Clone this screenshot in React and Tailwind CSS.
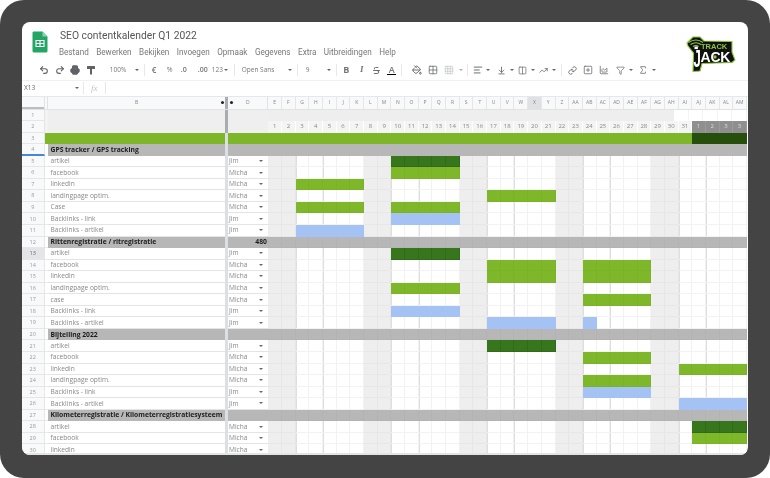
import React from "react";
import { Undo2, Redo2, Printer, Strikethrough, PaintBucket, Grid2x2, Grid3x3, AlignLeft, ArrowDownToLine, Columns2, TrendingUp, Link, SquarePlus, ChartArea, Filter, Sigma } from "lucide-react";

const COLS = ["E","F","G","H","I","J","K","L","M","N","O","P","Q","R","S","T","U","V","W","X","Y","Z","AA","AB","AC","AD","AE","AF","AG","AH","AI","AJ","AK","AL","AM"];
const WEEKEND = new Set([0,1,7,8,14,15,21,22,28,29]);
const WEEKLINE = new Set([2,9,16,23,30,4,11,18,25,32]);
const G = "g", D = "d", B = "b";

const ROWS = [
  { n: 5, t: "artikel", w: "Jim", bars: [[9, 13, D]] },
  { n: 6, t: "facebook", w: "Micha", bars: [[9, 13, G]] },
  { n: 7, t: "linkedin", w: "Micha", bars: [[2, 6, G]] },
  { n: 8, t: "landingpage optim.", w: "Micha", bars: [[16, 20, G]] },
  { n: 9, t: "Case", w: "Micha", bars: [[2, 6, G], [9, 13, G]] },
  { n: 10, t: "Backlinks - link", w: "Jim", bars: [[9, 13, B]] },
  { n: 11, t: "Backlinks - artikel", w: "Jim", bars: [[2, 6, B]] },
  { n: 12, t: "Rittenregistratie / ritregistratie", section: true, v: "480" },
  { n: 13, t: "artikel", w: "Jim", bars: [[9, 13, D]], active: true },
  { n: 14, t: "facebook", w: "Micha", bars: [[16, 20, G], [23, 27, G]] },
  { n: 15, t: "linkedin", w: "Micha", bars: [[16, 20, G], [23, 27, G]] },
  { n: 16, t: "landingpage optim.", w: "Micha", bars: [[9, 13, G]] },
  { n: 17, t: "case", w: "Micha", bars: [[23, 27, G]] },
  { n: 18, t: "Backlinks - link", w: "Jim", bars: [[9, 13, B]] },
  { n: 19, t: "Backlinks - artikel", w: "Jim", bars: [[16, 20, B], [23, 23, B]] },
  { n: 20, t: "Bijtelling 2022", section: true },
  { n: 21, t: "artikel", w: "Jim", bars: [[16, 20, D]] },
  { n: 22, t: "facebook", w: "Micha", bars: [[23, 27, G]] },
  { n: 23, t: "linkedin", w: "Micha", bars: [[30, 34, G]] },
  { n: 24, t: "landingpage optim.", w: "Micha", bars: [[23, 27, G]] },
  { n: 25, t: "Backlinks - link", w: "Jim", bars: [[23, 27, B]] },
  { n: 26, t: "Backlinks - artikel", w: "Jim", bars: [[30, 34, B]] },
  { n: 27, t: "Kilometerregistratie / Kilometerregistratiesysteem", section: true },
  { n: 28, t: "artikel", w: "Micha", bars: [[31, 34, D]] },
  { n: 29, t: "facebook", w: "Micha", bars: [[31, 34, G]] },
  { n: 30, t: "linkedin", w: "Micha", bars: [] },
];

const Caret = ({ className = "" }) => (
  <span className={"w-0 h-0 border-x-[2px] border-x-transparent border-t-[2.5px] border-t-[#666] " + className} />
);
const Sep = ({ className = "" }) => <span className={"w-px h-[12px] bg-[#e8e8e8] " + className} />;
const Ic = ({ children, className = "w-[15.7px]" }) => (
  <span className={"flex justify-center items-center text-[#5f6368] " + className}>{children}</span>
);

function Logo() {
  return (
    <svg width="52" height="40" viewBox="0 0 52 40" className="absolute left-[685px] top-[34px] blur-[0.3px]">
      <path d="M2 9 L8 3 L15 3 L19 7 L47 7.5 L47 18 L50 26 L47 28.5 L17 29.5 L15 37 L8 37.5 L8.5 19 L3 12 Z" fill="#111" stroke="#8cc63f" strokeWidth="1.1" strokeLinejoin="round" />
      <path d="M3.5 8.5 Q11 3.5 18 8.5 M5.5 10.5 Q11 7 16 10.5 M8 12.5 Q11 10.5 13.5 12.5" fill="none" stroke="#8cc63f" strokeWidth="1.2" />
      <text x="16" y="14.5" fontFamily="Liberation Sans, sans-serif" fontWeight="700" fontSize="7.5" fill="#8cc63f">TRACK</text>
      <rect x="9.5" y="12.5" width="3.4" height="2.6" fill="#fff" />
      <text transform="translate(8.5 33) scale(0.55 1)" fontFamily="Liberation Sans, sans-serif" fontWeight="700" fontSize="24" fill="#fff">J</text>
      <text x="15.5" y="28" fontFamily="Liberation Sans, sans-serif" fontWeight="700" fontSize="14" letterSpacing="-0.2" fill="#fff">ACK</text>
      <circle cx="30" cy="23" r="1.7" fill="#8cc63f" />
    </svg>
  );
}

function SheetIcon() {
  return (
    <svg width="16" height="22" viewBox="0 0 16 22" className="shrink-0">
      <path d="M1.5 0.5 H10.5 L15.5 5.5 V20 A1.5 1.5 0 0 1 14 21.5 H2 A1.5 1.5 0 0 1 0.5 20 V2 A1.5 1.5 0 0 1 1.5 0.5 Z" fill="#23a566" />
      <path d="M10.5 0.5 L15.5 5.5 H10.5 Z" fill="#8ed1b1" />
      <path d="M4 9.5 H12 V15.5 H4 Z M4 12.5 H12 M8 9.5 V15.5" fill="none" stroke="#fff" strokeWidth="1.1" />
    </svg>
  );
}

function PaintFormat() {
  return (
    <svg width="10" height="10" viewBox="0 0 10 10" fill="currentColor">
      <rect x="1" y="1" width="8" height="3" rx="0.5" />
      <rect x="4" y="4" width="2" height="5.5" />
    </svg>
  );
}

function Toolbar() {
  return (
    <div className="h-[21px] border-b border-[#f0f0f0] flex items-center pl-[14px] text-[#777] font-['Open_Sans',sans-serif]">
      <Ic><Undo2 size={10} strokeWidth={2.6} /></Ic>
      <Ic><Redo2 size={10} strokeWidth={2.6} /></Ic>
      <Ic><Printer size={10} strokeWidth={2.4} fill="currentColor" /></Ic>
      <Ic><PaintFormat /></Ic>
      <span className="ml-[11px] text-[6.5px] w-[18px]">100%</span>
      <Caret className="ml-[7px]" />
      <Sep className="ml-[5px]" />
      <span className="ml-[7px] w-[6px] text-[8px] font-semibold">€</span>
      <span className="ml-[9px] w-[6px] text-[7px]">%</span>
      <span className="ml-[8px] w-[8px] text-[7px] font-semibold">.0</span>
      <span className="ml-[9px] w-[11px] text-[7px] font-semibold">.00</span>
      <span className="ml-[3px] w-[12px] text-[6.5px]">123</span>
      <Caret />
      <Sep className="ml-[6px]" />
      <span className="ml-[7px] w-[40px] text-[6.5px]">Open Sans</span>
      <Caret className="ml-[6px]" />
      <Sep className="ml-[5px]" />
      <span className="ml-[8px] w-[5px] text-[6.5px]">9</span>
      <Caret className="ml-[16px]" />
      <Sep className="ml-[5px]" />
      <span className="ml-[5px] w-[9px] text-[9px] font-bold text-center">B</span>
      <span className="ml-[7px] w-[8px] text-[9px] font-bold italic text-center font-['Liberation_Serif',serif]">I</span>
      <Ic className="ml-[5px] w-[11px]"><Strikethrough size={9} strokeWidth={2.4} /></Ic>
      <span className="ml-[5px] w-[10px] flex flex-col items-center leading-none">
        <span className="text-[9px] font-semibold leading-[9px]">A</span>
        <span className="w-[9px] h-[1.5px] bg-black" />
      </span>
      <Sep className="ml-[4px]" />
      <Ic className="ml-[9px] w-[12px]"><PaintBucket size={10} strokeWidth={2.2} /></Ic>
      <Ic className="ml-[5px] w-[11px]"><Grid2x2 size={10} strokeWidth={1.8} /></Ic>
      <Ic className="ml-[5px] w-[11px] opacity-50"><Grid3x3 size={10} strokeWidth={1.2} /></Ic>
      <Caret className="ml-[4px] opacity-50" />
      <Sep className="ml-[4px]" />
      <Ic className="ml-[5px] w-[10px]"><AlignLeft size={10} strokeWidth={2.2} /></Ic>
      <Caret className="ml-[3px]" />
      <Ic className="ml-[7px] w-[10px]"><ArrowDownToLine size={9} strokeWidth={2.2} /></Ic>
      <Caret className="ml-[3px]" />
      <Ic className="ml-[4px] w-[10px]"><Columns2 size={9} strokeWidth={1.8} /></Ic>
      <Caret className="ml-[3px]" />
      <Ic className="ml-[4px] w-[10px]"><TrendingUp size={9} strokeWidth={2} /></Ic>
      <Caret className="ml-[3px]" />
      <Sep className="ml-[5px]" />
      <Ic className="ml-[5px] w-[11px]"><Link size={9} strokeWidth={2.2} /></Ic>
      <Ic className="ml-[5px] w-[11px]"><SquarePlus size={10} strokeWidth={1.8} /></Ic>
      <Ic className="ml-[5px] w-[11px]"><ChartArea size={10} strokeWidth={1.8} /></Ic>
      <Ic className="ml-[5px] w-[11px]"><Filter size={9} strokeWidth={1.8} /></Ic>
      <Caret className="ml-[3px]" />
      <Ic className="ml-[5px] w-[11px]"><Sigma size={10} strokeWidth={1.8} /></Ic>
      <Caret className="ml-[3px]" />
    </div>
  );
}

const rowCls = "flex h-[11.55px] shrink-0";
const numCls = "w-[22.5px] shrink-0 flex items-center justify-center text-[5.5px] text-[#999] bg-[#f8f9fa] border-r border-b border-[#e4e6e8]";
const dividerCls = "w-[3px] shrink-0 bg-[#dbe0e5]";

function barColor(row, i) {
  for (const [a, b, c] of row.bars || []) if (i >= a && i <= b) return c;
  return null;
}

function Cell({ row, i }) {
  const c = barColor(row, i);
  let cls = "flex-1 min-w-0 border-r border-b ";
  if (row.section) cls += "bg-[#b7b7b7] border-[#b3b3b3]";
  else if (c === G) cls += "bg-[#7fb72a] border-[#7ab326]";
  else if (c === D) cls += "bg-[#38761d] border-[#306c18]";
  else if (c === B) cls += "bg-[#a4c2f4] border-[#a4c2f4]";
  else if (WEEKEND.has(i)) cls += "bg-[#eeeeee] border-[#e7e7e7]";
  else cls += "bg-white border-[#f2f2f2]";
  return (
    <div className={cls}>
      {!c && !row.section && WEEKLINE.has(i) ? <div className="w-px h-full bg-[#dedede]" /> : null}
    </div>
  );
}

function DataRow({ row }) {
  return (
    <div className={rowCls}>
      <div className={numCls + (row.active ? " !bg-[#e3e5e8] !text-[#666]" : "")}>{row.n}</div>
      <div className="w-[3.5px] shrink-0 bg-white border-b border-[#e8e9ea]" />
      {row.section ? (
        <div className="w-[177px] shrink-0 bg-[#b7b7b7] pl-[2.5px] flex items-center text-[6.75px] font-bold text-[#1c1c1c] whitespace-nowrap overflow-hidden">{row.t}</div>
      ) : (
        <div className="w-[177px] shrink-0 bg-white border-b border-[#e4e4e4] pl-[2.5px] flex items-center text-[6.6px] text-[#888] whitespace-nowrap">{row.t}</div>
      )}
      <div className={dividerCls} />
      {row.section ? (
        <div className="w-[40.4px] shrink-0 bg-[#b7b7b7] pr-[1.5px] flex items-center justify-end text-[6.75px] font-bold text-[#222]">{row.v}</div>
      ) : (
        <div className="w-[40.4px] shrink-0 bg-white border-b border-[#e4e4e4] pl-[1px] pr-[5px] flex items-center justify-between text-[6.6px] text-[#888]">
          <span>{row.w}</span>
          <Caret />
        </div>
      )}
      <div className="flex-1 flex min-w-0">
        {COLS.map((_, i) => <Cell key={i} row={row} i={i} />)}
      </div>
    </div>
  );
}

function Sheet() {
  return (
    <div className="flex-1 min-h-0 overflow-hidden pr-px font-['Open_Sans',sans-serif] border-b-2 border-[#e4e4e4]">
      <div className="flex h-[13px] shrink-0 bg-[#f8f9fa] border-b border-[#e0e2e4] text-[5px] text-[#888]">
        <div className="w-[22.5px] shrink-0 border-r border-[#e0e2e4] relative">
          <div className="absolute left-0 right-0 bottom-0 h-[1.5px] bg-[#bcbfc2]" />
        </div>
        <div className="w-[3.5px] shrink-0 border-r border-[#e0e2e4]" />
        <div className="w-[177px] shrink-0 flex items-center relative justify-center">
          B
          <span className="absolute right-[1.5px] w-[3px] h-[3px] rounded-full bg-[#222]" />
        </div>
        <div className="w-[3px] shrink-0 bg-[#a9adb1]" />
        <div className="w-[40.4px] shrink-0 flex items-center justify-center relative border-r border-[#e0e2e4]">
          <span className="absolute left-[2px] w-[3px] h-[3px] rounded-full bg-[#222]" />
          D
        </div>
        <div className="flex-1 flex min-w-0">
          {COLS.map((c) => (
            <div key={c} className={"flex-1 min-w-0 flex items-center justify-center border-r border-[#e4e6e8] " + (c === "X" ? "bg-[#dfe1e4]" : "")}>{c}</div>
          ))}
        </div>
      </div>

      <div className={rowCls}>
        <div className={numCls}>1</div>
        <div className="w-[3.5px] shrink-0 bg-[#f3f3f3]" />
        <div className="w-[177px] shrink-0 bg-[#efefef]" />
        <div className="w-[3px] shrink-0 bg-[#a9adb1]" />
        <div className="w-[40.4px] shrink-0 bg-[#efefef]" />
        <div className="flex-1 flex min-w-0">
          {COLS.map((c, i) => <div key={c} className={"flex-1 min-w-0 " + (i < 30 ? "bg-[#eeeeee]" : "bg-white border-r border-[#f4f4f4]")} />)}
        </div>
      </div>

      <div className={rowCls}>
        <div className={numCls}>2</div>
        <div className="w-[3.5px] shrink-0 bg-[#f3f3f3]" />
        <div className="w-[177px] shrink-0 bg-[#efefef]" />
        <div className="w-[3px] shrink-0 bg-[#a9adb1]" />
        <div className="w-[40.4px] shrink-0 bg-[#efefef]" />
        <div className="flex-1 flex min-w-0 text-[6px]">
          {COLS.map((c, i) => (
            <div key={c} className={"flex-1 min-w-0 flex items-center justify-center border-r " + (i < 31 ? "bg-[#f4f4f4] border-white text-[#888]" : "bg-[#8f8f8f] border-[#9a9a9a] text-[#ddd]")}>
              {i < 31 ? i + 1 : i === 34 ? 3 : i - 30}
            </div>
          ))}
        </div>
      </div>

      <div className={rowCls}>
        <div className={numCls}>3</div>
        <div className="flex-1 flex min-w-0">
          <div className="w-[180.5px] shrink-0 bg-[#7db628]" />
          <div className="w-[3px] shrink-0 bg-[#dbe0e5]" />
          <div className="w-[40.4px] shrink-0 bg-[#7db628]" />
          <div className="flex-1 flex min-w-0">
            {COLS.map((c, i) => <div key={c} className={"flex-1 min-w-0 " + (i < 31 ? "bg-[#7db628]" : "bg-[#274f0c]")} />)}
          </div>
        </div>
      </div>

      <div className={rowCls}>
        <div className={numCls + " border-b-2 !border-b-[#4a86d8]"}>4</div>
        <div className="w-[3.5px] shrink-0 bg-white" />
        <div className="w-[177px] shrink-0 bg-[#b7b7b7] pl-[2.5px] flex items-center text-[6.75px] font-bold text-[#1c1c1c] whitespace-nowrap">GPS tracker / GPS tracking</div>
        <div className={dividerCls} />
        <div className="w-[40.4px] shrink-0 bg-[#b7b7b7]" />
        <div className="flex-1 bg-[#b7b7b7]" />
      </div>

      {ROWS.map((r) => <DataRow key={r.n} row={r} />)}
    </div>
  );
}

export default function App() {
  return (
    <div className="w-[770px] h-[478px] bg-white relative overflow-hidden">
      <div className="w-full h-full bg-[#444444] rounded-[24px] pt-[22px] pl-[22px] pr-[22px] pb-[23.5px]">
        <div className="w-full h-full bg-white rounded-[8px] overflow-hidden flex flex-col blur-[0.5px] font-['Open_Sans',sans-serif]">
          <div className="h-[38px] shrink-0 flex items-start pl-[10px] pt-[9px]">
            <SheetIcon />
            <div className="ml-[11px] -mt-[2px]">
              <div className="font-['Roboto',sans-serif] text-[10.3px] leading-[14px] text-[#555] whitespace-nowrap pl-px">SEO contentkalender Q1 2022</div>
              <div className="flex mt-[3.5px] gap-[7.5px] text-[8.15px] leading-[10px] text-[#777] font-['Roboto',sans-serif] whitespace-nowrap">
                <span>Bestand</span><span>Bewerken</span><span>Bekijken</span><span>Invoegen</span><span>Opmaak</span><span>Gegevens</span><span>Extra</span><span>Uitbreidingen</span><span>Help</span>
              </div>
            </div>
          </div>
          <Toolbar />
          <div className="h-[15.5px] shrink-0 flex items-center border-b border-[#e6e7e9] text-[#666]">
            <span className="pl-[2px] w-[53px] text-[6.5px]">X13</span>
            <Caret />
            <Sep className="ml-[4px] h-[10px]" />
            <span className="ml-[7px] text-[9px] italic text-[#c4c4c4] font-['Liberation_Serif',serif]">fx</span>
            <Sep className="ml-[7px] h-[10px]" />
          </div>
          <Sheet />
        </div>
      </div>
      <Logo />
    </div>
  );
}
